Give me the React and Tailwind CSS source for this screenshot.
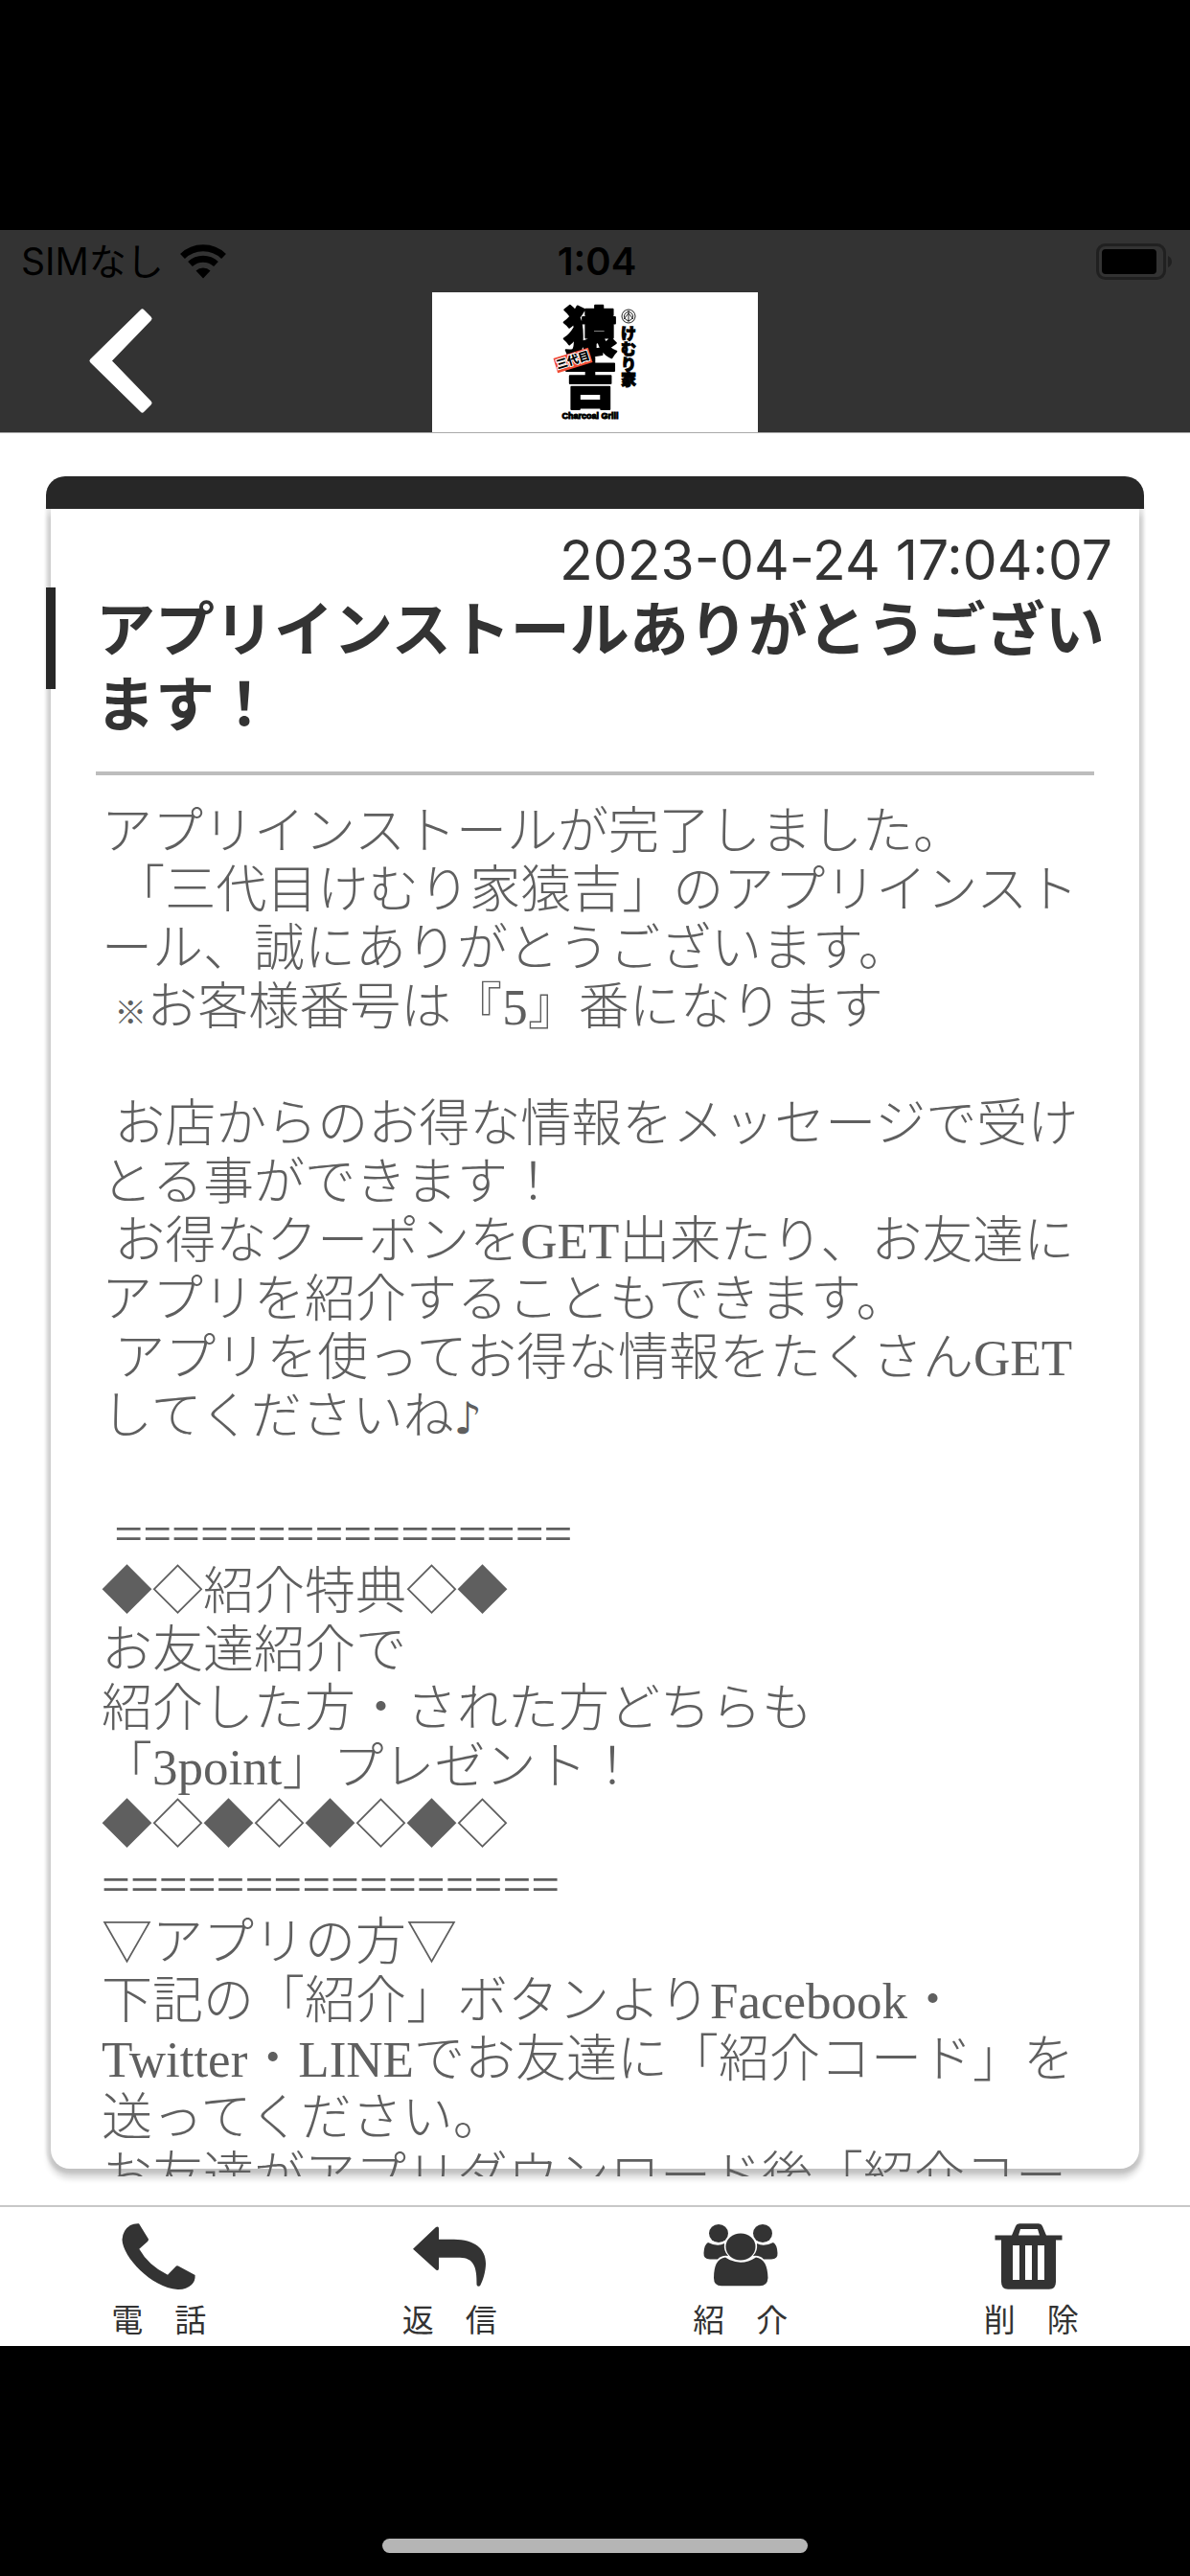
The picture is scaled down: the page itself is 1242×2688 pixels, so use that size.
const BODY_INTRO = `アプリインストールが完了しました。
 「三代目けむり家猿吉」のアプリインストール、誠にありがとうございます。
 `;

const BODY_MESSAGE = `お客様番号は『5』番になります

 お店からのお得な情報をメッセージで受けとる事ができます！
 お得なクーポンをGET出来たり、お友達にアプリを紹介することもできます。
 アプリを使ってお得な情報をたくさんGETしてくださいね`;

const BODY_REFERRAL = `

 ================
◆◇紹介特典◇◆
お友達紹介で
紹介した方・された方どちらも
「3point」プレゼント！
◆◇◆◇◆◇◆◇
================
▽アプリの方▽
下記の「紹介」ボタンよりFacebook・Twitter・LINEでお友達に「紹介コード」を送ってください。
お友達がアプリダウンロード後「紹介コード」を入力してください。`;

function WifiIcon() {
  return (
    <svg width="50" height="38" viewBox="0 0 50 38" aria-hidden="true">
      <g fill="none" stroke="#000" strokeWidth="7">
        <path d="M3.500 13.500A31 31 0 0 1 46.500 13.500" />
        <path d="M11.500 21.500A20 20 0 0 1 38.500 21.500" />
      </g>
      <path d="M17.500 28.500A11 11 0 0 1 32.500 28.500L25 36.500Z" fill="#000" />
    </svg>
  );
}

function BatteryIcon() {
  return (
    <svg width="80" height="38" viewBox="0 0 80 38" aria-label="バッテリー">
      <rect x="1.500" y="1.500" width="70" height="35" rx="8" fill="none" stroke="#202020" strokeWidth="3" />
      <rect x="6" y="6" width="57" height="26" rx="4" fill="#000" />
      <path d="M75 13q4 2 4 6t-4 6z" fill="#202020" />
    </svg>
  );
}

function ShopLogo() {
  return (
    <svg viewBox="0 0 340 146" className="h-[146px] w-[340px] bg-white" role="img" aria-label="三代目 けむり家 猿吉">
      <g fontFamily="'Noto Sans CJK JP', sans-serif" fontWeight="900" textAnchor="middle" fill="#000">
        <g stroke="#000" strokeWidth="2" strokeLinejoin="round">
          <text x="165" y="62" fontSize="56">猿</text>
          <text x="165" y="116" fontSize="56">吉</text>
        </g>
        <g fontSize="16" stroke="#000" strokeWidth="1">
          <text x="205" y="49">け</text>
          <text x="205" y="65">む</text>
          <text x="205" y="81">り</text>
          <text x="205" y="97">家</text>
        </g>
        <g transform="rotate(-17 147 71)">
          <rect x="128" y="63" width="38" height="16" fill="#f04a32" />
          <text x="147" y="75" fontSize="12" stroke="#fff" strokeWidth="2" paintOrder="stroke">三代目</text>
        </g>
        <text x="165" y="132" fontSize="9" fontFamily="'Liberation Sans', sans-serif" stroke="#000" strokeWidth="1">Charcoal Grill</text>
      </g>
      <g fill="none" stroke="#222" strokeWidth="1">
        <circle cx="205" cy="25" r="7" />
        <circle cx="205" cy="25" r="4.500" />
        <path d="M205 19v12M200 28l5-6 5 6" />
      </g>
    </svg>
  );
}

const ICONS = {
  phone: (
    <path d="M12 5Q16 3 21 3.300L31 19.500Q31 21 30 22L21.300 29.700Q31 47 51 56.700L60 47.500Q61 47 62 47.500L79.600 57Q80 63 76 67Q70 72.500 61.300 72C34 70 4 38 3.500 20Q4 10 12 5Z" />
  ),
  reply: (
    <path d="M4 29.700L28 7Q31 5.500 31 8.500V19.700H47C68 20 80 29 80 45C80 53 77 63 74 68.300Q71 69.500 70.500 67C71 48 67 39 53 38.700H31V50Q31 53 28 51.500Z" />
  ),
  group: (
    <>
      <ellipse cx="19" cy="13.500" rx="10" ry="9.500" />
      <ellipse cx="65" cy="13.500" rx="10" ry="9.500" />
      <path d="M8 23Q18 28 25 24Q24 32 29 37Q22 36 18 40.500H10Q3 40 3.500 34Q4 25 8 23Z" />
      <path d="M76 23Q66 28 59 24Q60 32 55 37Q62 36 66 40.500H74Q81 40 80.500 34Q80 25 76 23Z" />
      <ellipse cx="42" cy="27.500" rx="15.500" ry="14" />
      <path d="M26 38.500Q42 49 58 38.500Q70 40 70.500 60Q70 68.300 62 68.300H22Q14 68.300 14 60Q14 40 26 38.500Z" />
    </>
  ),
  trash: (
    <path
      fillRule="evenodd"
      d="M22 15.500L26 6Q27 3.300 30 3.300H50Q53 3.300 54 6L58 15.500H74.500V20.500H68V64Q68 71.700 61 71.700H18Q11 71.700 11 64V20.500H4.500V15.500ZM29 15.500H51L49 9H31ZM23 26V62H30V26ZM36 26V62H43V26ZM49 26V62H56V26Z"
    />
  ),
};

const ACTIONS = [
  { icon: "phone", label: "電　話" },
  { icon: "reply", label: "返　信" },
  { icon: "group", label: "紹　介" },
  { icon: "trash", label: "削　除" },
];

export default function App() {
  return (
    <div lang="ja" className="flex h-screen flex-col bg-black font-['Inter','Noto_Sans_CJK_JP',sans-serif] text-[#333]">
      <div className="mt-60 flex min-h-0 flex-1 flex-col bg-white">
        <header className="border-b border-[#aaa] bg-[#333]">
          <div className="grid h-[65px] grid-cols-3 items-center pl-[22px] pr-[18px] text-black">
            <div className="flex items-center gap-4 text-[39px] leading-none">
              <span>SIMなし</span>
              <WifiIcon />
            </div>
            <time className="text-center text-[40px] font-semibold leading-none">1:04</time>
            <div className="flex justify-end">
              <BatteryIcon />
            </div>
          </div>
          <div className="grid grid-cols-[1fr_auto_1fr] items-center">
            <button type="button" aria-label="戻る" className="ml-[90px] w-[74px]">
              <svg width="74" height="118" viewBox="0 0 74 118" className="block">
                <path d="M58.500 6L66 13.500L23.500 57.500L66 101.500L58.500 109L6 57.500Z" fill="#fff" stroke="#fff" strokeWidth="5" strokeLinejoin="round" />
              </svg>
            </button>
            <ShopLogo />
          </div>
        </header>

        <main className="flex min-h-0 flex-1 flex-col px-12 pb-[38px] pt-[45px]">
          <div className="relative z-10 h-[34px] shrink-0 rounded-t-[20px] bg-[#272727]" />
          <article className="mx-[5px] flex min-h-0 flex-1 flex-col rounded-b-[20px] bg-white shadow-[0_8px_6px_2px_rgba(0,0,0,0.16),0_0_3px_5px_rgba(0,0,0,0.09)]">
            <time className="mt-5 block pr-7 text-right text-[57px] leading-[68px]">2023-04-24 17:04:07</time>
            <div className="relative pl-[47px] pr-8">
              <span className="absolute -left-[5px] -top-[6px] h-[106px] w-[10px] bg-[#272727]" />
              <h1 className="text-[62px] font-bold leading-[78px]">アプリインストールありがとうございます！</h1>
            </div>
            <hr className="mx-[47px] mt-[30px] border-0 border-t-4 border-[#bdbdbd]" />
            <div className="-mb-2 min-h-0 flex-1 overflow-hidden whitespace-pre-wrap pl-[53px] pr-[46px] pt-[29px] font-['Liberation_Serif','Noto_Sans_CJK_JP',serif] text-[53px] font-light leading-[61px] text-[#5f5f5f] [line-break:loose]">
              {BODY_INTRO}
              <span className="text-[34px] font-black leading-none">※</span>
              {BODY_MESSAGE}
              <span className="font-['DejaVu_Sans'] text-[46px] font-bold leading-none">♪</span>
              {BODY_REFERRAL}
            </div>
          </article>
        </main>

        <nav className="grid h-[147px] shrink-0 grid-cols-4 border-t-2 border-[#c8c8c8] px-[14px]">
          {ACTIONS.map(({ icon, label }) => (
            <button key={icon} type="button" className="flex flex-col items-center pt-[14px]">
              <svg width="84" height="76" viewBox="0 0 84 76" fill="#333" aria-hidden="true">
                {ICONS[icon]}
              </svg>
              <span className="mt-2 whitespace-pre text-[33px] leading-10">{label}</span>
            </button>
          ))}
        </nav>
      </div>
      <footer className="flex h-60 shrink-0 items-end justify-center pb-6">
        <div className="h-[15px] w-[444px] rounded-full bg-[#b5b5b5]" />
      </footer>
    </div>
  );
}
